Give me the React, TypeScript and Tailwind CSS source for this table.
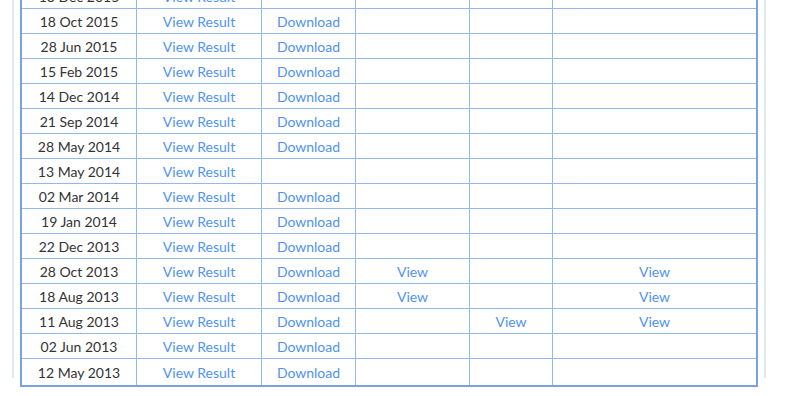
type Row = {
  date: string;
  result?: boolean;
  download?: boolean;
  c4?: boolean;
  c5?: boolean;
  c6?: boolean;
};

const rows: Row[] = [
  { date: '13 Dec 2015', result: true },
  { date: '18 Oct 2015', result: true, download: true },
  { date: '28 Jun 2015', result: true, download: true },
  { date: '15 Feb 2015', result: true, download: true },
  { date: '14 Dec 2014', result: true, download: true },
  { date: '21 Sep 2014', result: true, download: true },
  { date: '28 May 2014', result: true, download: true },
  { date: '13 May 2014', result: true },
  { date: '02 Mar 2014', result: true, download: true },
  { date: '19 Jan 2014', result: true, download: true },
  { date: '22 Dec 2013', result: true, download: true },
  { date: '28 Oct 2013', result: true, download: true, c4: true, c6: true },
  { date: '18 Aug 2013', result: true, download: true, c4: true, c6: true },
  { date: '11 Aug 2013', result: true, download: true, c5: true, c6: true },
  { date: '02 Jun 2013', result: true, download: true },
  { date: '12 May 2013', result: true, download: true },
];

function Link({ children }: { children: string }) {
  return <a href="#" className="text-[#4f93f2] no-underline">{children}</a>;
}

export default function App() {
  return (
    <div className="h-[396px] w-[800px] overflow-hidden bg-white font-['Lato','Liberation_Sans',sans-serif] text-[14px]">
      <div className="ml-[12px] h-full w-[754px] border-x-2 border-[#e2e8f0] px-[6px]">
        <div className="mt-[-18px] w-[738px] border-2 border-[#78a2e2]">
          <div className="grid grid-cols-[115px_125px_94px_114px_83px_203px]">
            {rows.map((r, i) => {
              const last = i === rows.length - 1;
              const cell = `flex items-center justify-center ${last ? 'h-[26px]' : 'h-[25px] border-b border-[#93b9ec]'}`;
              return (
                <div key={r.date} className="contents">
                  <div className={`${cell} border-r border-r-[#93b9ec] text-[#333]`}>{r.date}</div>
                  <div className={`${cell} border-r border-r-[#93b9ec]`}>{r.result && <Link>View Result</Link>}</div>
                  <div className={`${cell} border-r border-r-[#93b9ec]`}>{r.download && <Link>Download</Link>}</div>
                  <div className={`${cell} border-r border-r-[#93b9ec]`}>{r.c4 && <Link>View</Link>}</div>
                  <div className={`${cell} border-r border-r-[#93b9ec]`}>{r.c5 && <Link>View</Link>}</div>
                  <div className={cell}>{r.c6 && <Link>View</Link>}</div>
                </div>
              );
            })}
          </div>
        </div>
      </div>
    </div>
  );
}
